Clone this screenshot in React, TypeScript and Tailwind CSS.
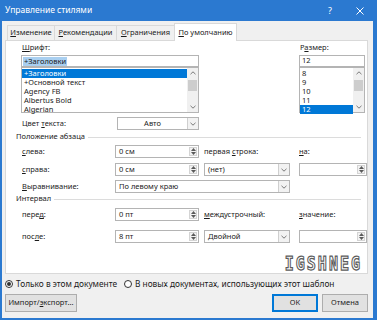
import React from "react";

function ChevronDown() {
  return (
    <svg width="6" height="4" viewBox="0 0 6 4">
      <path d="M0.5 0.8L3 3.2L5.5 0.8" stroke="#6b6b6b" strokeWidth="0.9" fill="none" />
    </svg>
  );
}

function ChevronUp() {
  return (
    <svg width="6" height="4" viewBox="0 0 6 4">
      <path d="M0.5 3.2L3 0.8L5.5 3.2" stroke="#6b6b6b" strokeWidth="0.9" fill="none" />
    </svg>
  );
}

function Spin({ value, className }: { value?: string; className: string }) {
  return (
    <div className={`flex h-[13px] border border-[#b4b4b4] bg-white ${className}`}>
      <span className="flex-1 pl-[3px] leading-[11px]">{value}</span>
      <div className="my-[1px] mr-[1px] flex w-[8px] flex-col items-center justify-center gap-[1px] border border-[#d4d4d4] bg-[#f2f2f2]">
        <svg width="5" height="3" viewBox="0 0 5 3">
          <path d="M0 3L2.5 0L5 3Z" fill="#5a5a5a" />
        </svg>
        <svg width="5" height="3" viewBox="0 0 5 3">
          <path d="M0 0L2.5 3L5 0Z" fill="#5a5a5a" />
        </svg>
      </div>
    </div>
  );
}

function Drop({ value, className, center }: { value: string; className: string; center?: boolean }) {
  return (
    <div className={`flex h-[13px] border border-[#b4b4b4] bg-white ${className}`}>
      <span className={`flex-1 leading-[11px] ${center ? "text-center" : "pl-[3px]"}`}>{value}</span>
      <div className="flex w-[11px] items-center justify-center border-l border-[#cfcfcf] bg-[#f2f2f2]">
        <ChevronDown />
      </div>
    </div>
  );
}

function ListBox({ items, selected }: { items: string[]; selected: number }) {
  return (
    <div className="flex h-[46px] border border-[#b4b4b4] bg-white">
      <div className="flex-1 pt-[1px]">
        {items.map((item, i) => (
          <div
            key={item}
            className={`h-[9px] pl-[2px] leading-[9px] ${i === selected ? "bg-[#0078d7] text-white" : ""}`}
          >
            {item}
          </div>
        ))}
      </div>
      <div className="flex w-[11px] flex-col bg-[#f0f0f0]">
        <div className="flex h-[10px] items-center justify-center">
          <ChevronUp />
        </div>
        <div className="mx-[1px] mt-[2px] h-[11px] bg-[#cdcdcd]" />
        <div className="mt-auto flex h-[10px] items-center justify-center">
          <ChevronDown />
        </div>
      </div>
    </div>
  );
}

function Group({ title }: { title: string }) {
  return (
    <div className="flex h-[12px] items-center pl-[10px] pr-[6px]">
      <span>{title}</span>
      <div className="ml-[3px] h-px flex-1 bg-[#dcdcdc]" />
    </div>
  );
}

export default function App() {
  return (
    <div className="flex h-[320px] w-[377px] flex-col overflow-hidden bg-[#2b79d0] pb-[2px] pl-[2px] pr-[4px] font-['Noto_Sans','Open_Sans',sans-serif] text-[7.5px] text-[#1b1b1b]">
      {/* title bar */}
      <div className="flex h-[21px] shrink-0 items-center text-white">
        <span className="pl-[3px] text-[8.5px]">Управление стилями</span>
        <span className="ml-auto mr-[24px] text-[9px]">?</span>
        <svg width="8" height="8" viewBox="0 0 8 8" className="mr-[9px]">
          <path d="M0.5 0.5L7.5 7.5M7.5 0.5L0.5 7.5" stroke="#fff" strokeWidth="1" />
        </svg>
      </div>

      <div className="flex flex-1 flex-col bg-[#f0f0f0]">
        {/* tabs */}
        <div className="ml-[5px] flex h-[19px] items-end">
          <div className="flex h-[15px] w-[48px] items-center justify-center border border-b-0 border-[#d9d9d9]">
            <span><span className="underline">И</span>зменение</span>
          </div>
          <div className="-ml-px flex h-[15px] w-[63px] items-center justify-center border border-b-0 border-[#d9d9d9]">
            <span><span className="underline">Р</span>екомендации</span>
          </div>
          <div className="-ml-px flex h-[15px] w-[59px] items-center justify-center border border-b-0 border-[#d9d9d9]">
            <span><span className="underline">О</span>граничения</span>
          </div>
          <div className="relative z-10 -mb-px -ml-px flex h-[18px] w-[63px] items-center justify-center border border-b-0 border-[#d9d9d9] bg-white">
            <span><span className="underline">П</span>о умолчанию</span>
          </div>
        </div>

        {/* panel */}
        <div className="relative ml-[3px] h-[234px] w-[363px] border border-[#d9d9d9] bg-white">
          <div className="flex pl-[15px]">
            <div className="w-[178px]">
              <div className="flex h-[14px] items-center pl-[1px]">
                <span><span className="underline">Ш</span>рифт:</span>
              </div>
              <div className="flex h-[12px] items-center border border-[#b4b4b4] pl-[1px]">
                <span className="bg-[#a9cff0] px-[1px] leading-[9px]">+Заголовки</span>
              </div>
              <ListBox
                items={["+Заголовки", "+Основной текст", "Agency FB", "Albertus Bold", "Algerian"]}
                selected={0}
              />
            </div>
            <div className="ml-[100px] w-[66px]">
              <div className="flex h-[14px] items-center pl-[1px]">
                <span>Р<span className="underline">а</span>змер:</span>
              </div>
              <div className="flex h-[12px] items-center border border-[#b4b4b4] pl-[2px]">12</div>
              <ListBox items={["8", "9", "10", "11", "12"]} selected={4} />
            </div>
          </div>

          <div className="mt-[4px] flex h-[13px] items-center pl-[16px]">
            <span className="w-[95px]">Цвет <span className="underline">т</span>екста:</span>
            <Drop value="Авто" center className="w-[82px]" />
          </div>

          <div className="mt-[1px]">
            <Group title="Положение абзаца" />
          </div>

          <div className="pl-[16px]">
            <div className="mt-[2px] flex h-[13px] items-center">
              <span className="w-[93px]"><span className="underline">с</span>лева:</span>
              <Spin value="0 см" className="w-[84px]" />
              <span className="ml-[5px] w-[86px]">первая <span className="underline">с</span>трока:</span>
              <span className="ml-[9px]"><span className="underline">н</span>а:</span>
            </div>
            <div className="mt-[5px] flex h-[13px] items-center">
              <span className="w-[93px]"><span className="underline">с</span>права:</span>
              <Spin value="0 см" className="w-[84px]" />
              <Drop value="(нет)" className="ml-[5px] w-[86px]" />
              <Spin className="ml-[9px] w-[68px]" />
            </div>
            <div className="mt-[4px] flex h-[13px] items-center">
              <span className="w-[93px]"><span className="underline">В</span>ыравнивание:</span>
              <Drop value="По левому краю" className="w-[175px]" />
            </div>
          </div>

          <Group title="Интервал" />

          <div className="pl-[16px]">
            <div className="mt-[3px] flex h-[13px] items-center">
              <span className="w-[93px]">пере<span className="underline">д</span>:</span>
              <Spin value="0 пт" className="w-[84px]" />
              <span className="ml-[5px] w-[86px]"><span className="underline">м</span>еждустрочный:</span>
              <span className="ml-[9px]"><span className="underline">з</span>начение:</span>
            </div>
            <div className="mt-[9px] flex h-[13px] items-center">
              <span className="w-[93px]">пос<span className="underline">л</span>е:</span>
              <Spin value="8 пт" className="w-[84px]" />
              <Drop value="Двойной" className="ml-[5px] w-[86px]" />
              <Spin className="ml-[9px] w-[68px]" />
            </div>
          </div>

          {/* watermark */}
          <div className="absolute right-[5px] top-[217px] scale-y-125 font-['DejaVu_Sans_Mono',monospace] text-[15px] font-bold leading-[12px] tracking-[2px] text-transparent [-webkit-text-stroke:1px_#5c5c5c]">
            IGSHNEG
          </div>
        </div>

        {/* radios */}
        <div className="mt-[4px] flex h-[12px] items-center pl-[3px] text-[8.3px]">
          <div className="flex h-[8px] w-[8px] items-center justify-center rounded-full border border-[#333] bg-white">
            <div className="h-[4px] w-[4px] rounded-full bg-[#333]" />
          </div>
          <span className="ml-[3px]">Только в этом документе</span>
          <div className="ml-[7px] h-[8px] w-[8px] rounded-full border border-[#333] bg-white" />
          <span className="ml-[3px]">В новых документах, использующих этот шаблон</span>
        </div>

        {/* buttons */}
        <div className="mt-[4px] flex h-[18px]">
          <div className="ml-[3px] flex w-[72px] items-center justify-center border border-[#adadad] bg-[#e1e1e1]">
            <span>Импорт/<span className="underline">э</span>кспорт...</span>
          </div>
          <div className="ml-auto flex w-[46px] items-center justify-center border border-[#0078d7] bg-[#e1e1e1] shadow-[inset_0_0_0_1px_#0078d7]">
            ОК
          </div>
          <div className="ml-[4px] mr-[5px] flex w-[46px] items-center justify-center border border-[#adadad] bg-[#e1e1e1]">
            Отмена
          </div>
        </div>
      </div>
    </div>
  );
}
